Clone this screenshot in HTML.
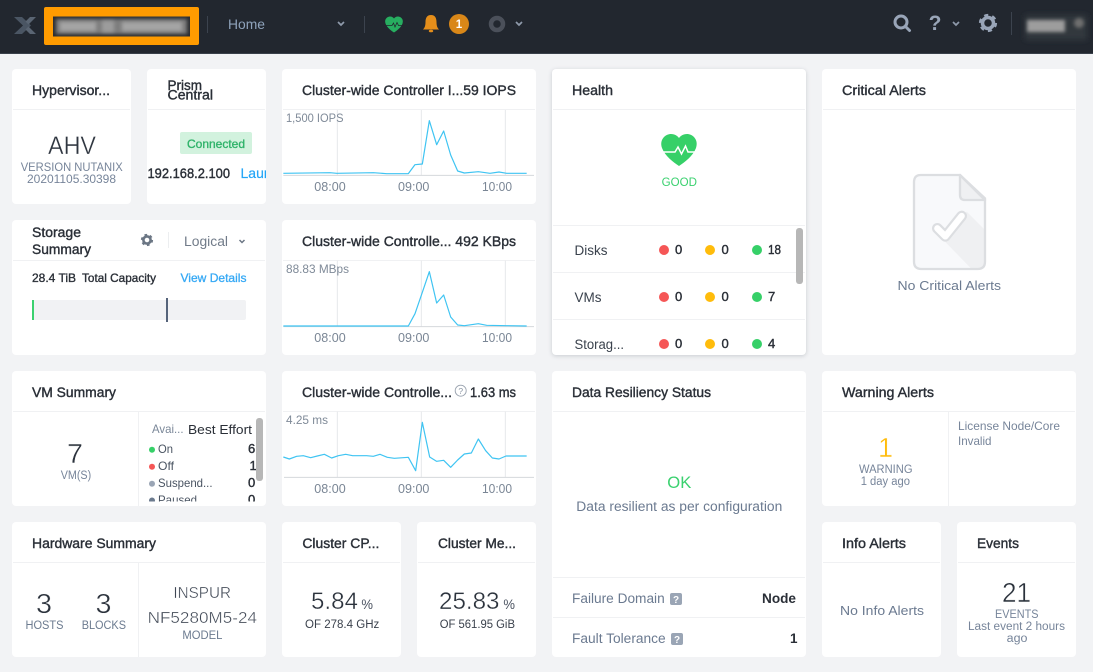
<!DOCTYPE html>
<html lang="en">
<head>
<meta charset="utf-8">
<title>Prism Home</title>
<style>
html,body{margin:0;padding:0;width:1093px;height:672px;overflow:hidden;background:#f2f3f5;font-family:"Liberation Sans",sans-serif}
#top{position:absolute;left:0;top:0;width:1093px;height:53px;background:#22272f;border-bottom:1px solid #39404a}
.card{position:absolute;background:#fff;border-radius:4px}
.card i{position:absolute;left:1px;right:1px;top:40px;height:1px;background:#f0f1f3}
svg{position:absolute;left:0;top:0}
text{font-family:"Liberation Sans",sans-serif}
.ti{font-size:13.5px;fill:#2a2f37;stroke:#2a2f37;stroke-width:.38}
.ax{font-size:12.5px;fill:#7a8695}
.yl{font-size:12px;fill:#7f8a98}
.sm{font-size:11.5px;fill:#77859a}
.big{font-size:28px;fill:#2b323c;stroke:#fff;stroke-width:.45}
.thin{stroke:#fff;stroke-width:.35}
.lb{font-size:13px;fill:#6b7a90}
.nm{font-size:13px;fill:#2a2f37;stroke:#2a2f37;stroke-width:.4}
.gl{stroke:#e6e8eb;stroke-width:3;fill:none}
.ln{stroke:#3fc4f2;stroke-width:3.6;fill:none;stroke-linejoin:round}
.dv{stroke:#f0f1f3;stroke-width:1}
</style>
</head>
<body>
<div id="top"></div>
<div class="card" style="left:12px;top:69px;width:119px;height:135px"><i></i></div>
<div class="card" style="left:147px;top:69px;width:119px;height:135px"><i></i></div>
<div class="card" style="left:12px;top:220px;width:254px;height:135px"><i></i></div>
<div class="card" style="left:282px;top:69px;width:254px;height:135px"><i></i></div>
<div class="card" style="left:282px;top:220px;width:254px;height:135px"><i></i></div>
<div class="card" style="left:282px;top:371px;width:254px;height:135px"><i></i></div>
<div class="card" style="left:552px;top:69px;width:254px;height:286px;box-shadow:0 1px 4px rgba(60,70,85,.22)"><i></i></div>
<div class="card" style="left:822px;top:69px;width:254px;height:286px"><i></i></div>
<div class="card" style="left:12px;top:371px;width:254px;height:135px"><i></i></div>
<div class="card" style="left:12px;top:522px;width:254px;height:135px"><i></i></div>
<div class="card" style="left:282px;top:522px;width:119px;height:135px"><i></i></div>
<div class="card" style="left:417px;top:522px;width:119px;height:135px"><i></i></div>
<div class="card" style="left:552px;top:371px;width:254px;height:286px"><i></i></div>
<div class="card" style="left:822px;top:371px;width:254px;height:135px"><i></i></div>
<div class="card" style="left:822px;top:522px;width:119px;height:135px"><i></i></div>
<div class="card" style="left:957px;top:522px;width:119px;height:135px"><i></i></div>

<svg width="1093" height="672" viewBox="0 0 1093 672" xmlns="http://www.w3.org/2000/svg">
<defs>
<filter id="b" x="-30%" y="-100%" width="160%" height="300%"><feGaussianBlur stdDeviation="2.6"/></filter>
<filter id="b2" x="-30%" y="-60%" width="160%" height="220%"><feGaussianBlur stdDeviation="1.8"/></filter>
<clipPath id="c0"><rect x="53" y="16.500" width="137" height="20"/></clipPath>
<clipPath id="c1"><rect x="147" y="69" width="119" height="135"/></clipPath>
<clipPath id="c2"><rect x="12" y="411" width="254" height="90.500"/></clipPath>
<path id="heart" d="M18 32C12 28 4 22 1 14C-2 5 5 0 10 0C14 0 16.500 2 18 4C19.500 2 22 0 26 0C31 0 38 5 35 14C32 22 24 28 18 32Z"/>
</defs>

<!-- top bar -->
<path d="M14 17h8l9 8.500-9 8.500h-8l9-8.500z" fill="#4a5563"/>
<path d="M36 17h-6l-4.500 4.500 3 3zM36 34h-6l-4.500-4.500 3-3z" fill="#5a6573"/>
<rect x="44" y="7" width="155" height="38" rx="2" fill="#ff9b00"/>
<rect x="53" y="16.500" width="137" height="20" fill="#2a2c30"/>
<g clip-path="url(#c0)">
<rect x="56" y="19" width="131" height="15" fill="#7e7e7e" filter="url(#b2)"/>
<rect x="60" y="22" width="36" height="9" fill="#a4a4a4" filter="url(#b2)"/>
<rect x="102" y="21" width="12" height="11" fill="#9c9c9c" filter="url(#b2)"/>
<rect x="122" y="22" width="60" height="9" fill="#a4a4a4" filter="url(#b2)"/>
</g>
<path d="M207.500 16v17M364.500 16v17M1011.500 12v23" stroke="#3c434e"/>
<text x="228" y="29" font-size="14" fill="#8fa3bb" textLength="37" lengthAdjust="spacingAndGlyphs">Home</text>
<path d="M338 22l3 3 3-3M516 22l3 3 3-3M953 22l3 3 3-3" fill="none" stroke="#8f9aab" stroke-width="1.700"/>
<use href="#heart" transform="translate(385 16.500) scale(.5)" fill="#27ae60"/>
<path d="M385 25.500h7l1.500-2.500 1.500 4 2-4.500 1.500 3h5" fill="none" stroke="#22272f" stroke-width=".8"/>
<path d="M431 15c-4 0-5.500 3-5.500 7 0 4-1 6-2.500 7.500h16c-1.500-1.500-2.500-3.500-2.500-7.500 0-4-1.500-7-5.500-7z" fill="#e58e1a"/>
<ellipse cx="431" cy="31" rx="2.200" ry="1.300" fill="#e58e1a"/>
<circle cx="459" cy="24" r="10" fill="#d98718"/>
<text x="459" y="28" font-size="11.500" font-weight="bold" fill="#fff" text-anchor="middle">1</text>
<circle cx="497" cy="24" r="6" fill="none" stroke="#4b505a" stroke-width="4.500"/>
<circle cx="901" cy="22" r="6" fill="none" stroke="#99a5b8" stroke-width="3"/>
<path d="M905.500 26.500l4 4" stroke="#99a5b8" stroke-width="3" stroke-linecap="round"/>
<text x="935" y="30" font-size="21" font-weight="bold" fill="#99a5b8" text-anchor="middle">?</text>
<circle cx="988" cy="23" r="5.500" fill="none" stroke="#99a5b8" stroke-width="3.500"/>
<circle cx="988" cy="23" r="8" fill="none" stroke="#99a5b8" stroke-width="2.200" stroke-dasharray="4.190 4.190"/>
<rect x="1025" y="15" width="62" height="25" fill="#33373e" filter="url(#b)"/>
<rect x="1027" y="20" width="38" height="12" fill="#9d9d9d" filter="url(#b2)"/>
<circle cx="1079" cy="23" r="5" fill="#6f6f6f" filter="url(#b2)"/>

<!-- hypervisor -->
<text class="ti" x="32" y="95" textLength="78" lengthAdjust="spacingAndGlyphs">Hypervisor...</text>
<text class="thin" x="48" y="154" font-size="25" fill="#2f3640" textLength="48" lengthAdjust="spacingAndGlyphs">AHV</text>
<text class="sm" x="20.700" y="171" textLength="102" lengthAdjust="spacingAndGlyphs">VERSION NUTANIX</text>
<text class="sm" x="27" y="183" textLength="89" lengthAdjust="spacingAndGlyphs">20201105.30398</text>

<!-- prism central -->
<text class="ti" x="167.500" y="90" textLength="34.500" lengthAdjust="spacingAndGlyphs">Prism</text>
<text class="ti" x="167.500" y="99.500" textLength="45.500" lengthAdjust="spacingAndGlyphs">Central</text>
<rect x="180" y="132" width="72" height="22" rx="2" fill="#d2f2de"/>
<text x="187" y="148" font-size="12" fill="#2fb36a" stroke="#2fb36a" stroke-width=".35" textLength="58" lengthAdjust="spacingAndGlyphs">Connected</text>
<g clip-path="url(#c1)">
<text x="147.500" y="178" font-size="14" fill="#2a2f37" stroke="#2a2f37" stroke-width=".4" textLength="82.500" lengthAdjust="spacingAndGlyphs">192.168.2.100</text>
<text x="240.500" y="178" font-size="14" fill="#22a5f7" stroke="#22a5f7" stroke-width=".2">Launch</text>
</g>

<!-- storage -->
<text class="ti" x="32" y="237" textLength="49" lengthAdjust="spacingAndGlyphs">Storage</text>
<text class="ti" x="32" y="254" textLength="59" lengthAdjust="spacingAndGlyphs">Summary</text>
<circle cx="147" cy="240" r="3.600" fill="none" stroke="#6b7684" stroke-width="2.600"/>
<circle cx="147" cy="240" r="5.300" fill="none" stroke="#6b7684" stroke-width="1.600" stroke-dasharray="2.770 2.780"/>
<path d="M168.500 232v16" stroke="#eceef0"/>
<text x="184" y="246" font-size="13.500" fill="#717b89" textLength="44" lengthAdjust="spacingAndGlyphs">Logical</text>
<path d="M239.500 240l2.500 2.500 2.500-2.500" fill="none" stroke="#6b7684" stroke-width="1.500"/>
<text x="32" y="282" font-size="12" fill="#2a2f37" stroke="#2a2f37" stroke-width=".35" textLength="44" lengthAdjust="spacingAndGlyphs">28.4 TiB</text>
<text x="82" y="282" font-size="12" fill="#2a2f37" stroke="#2a2f37" stroke-width=".35" textLength="74" lengthAdjust="spacingAndGlyphs">Total Capacity</text>
<text x="180.500" y="282" font-size="12" fill="#36a9f5" stroke="#36a9f5" stroke-width=".3" textLength="66" lengthAdjust="spacingAndGlyphs">View Details</text>
<rect x="32" y="300" width="214" height="20" rx="2" fill="#f1f2f4"/>
<rect x="32" y="300" width="2" height="20" fill="#3bd16f"/>
<rect x="166" y="298" width="2" height="24" fill="#55637a"/>

<!-- chart 1 -->
<text class="ti" x="302" y="95" textLength="214" lengthAdjust="spacingAndGlyphs">Cluster-wide Controller I...59 IOPS</text>
<g transform="translate(280 60) scale(.33333)">
<path class="gl" d="M172 150V346M424 150V346M676 150V346"/>
<path d="M10 346H762" stroke="#d5d8dc" stroke-width="3"/>
<path class="ln" d="M10 340L150 338 170 340 280 338 320 341 385 341 405 314 427 312 448 182 470 254 491 213 512 285 533 333 553 339 595 335 630 340 657 336 680 340 740 340"/>
</g>
<text class="yl" x="286" y="122" textLength="57.500" lengthAdjust="spacingAndGlyphs">1,500 IOPS</text>
<text class="ax" x="314.300" y="191" textLength="31.400" lengthAdjust="spacingAndGlyphs">08:00</text>
<text class="ax" x="398" y="191" textLength="31.400" lengthAdjust="spacingAndGlyphs">09:00</text>
<text class="ax" x="482" y="191" textLength="30" lengthAdjust="spacingAndGlyphs">10:00</text>

<!-- chart 2 -->
<text class="ti" x="302" y="246" textLength="214" lengthAdjust="spacingAndGlyphs">Cluster-wide Controlle... 492 KBps</text>
<g transform="translate(280 215) scale(.33333)">
<path class="gl" d="M172 137V335M424 137V335M676 137V335"/>
<path d="M10 335H762" stroke="#d5d8dc" stroke-width="3"/>
<path class="ln" d="M10 333L385 333 405 296 427 232 448 170 470 264 491 240 512 306 533 330 553 332 595 326 620 331 680 332 740 333"/>
</g>
<text class="yl" x="286" y="273" textLength="63" lengthAdjust="spacingAndGlyphs">88.83 MBps</text>
<text class="ax" x="314.300" y="342" textLength="31.400" lengthAdjust="spacingAndGlyphs">08:00</text>
<text class="ax" x="398" y="342" textLength="31.400" lengthAdjust="spacingAndGlyphs">09:00</text>
<text class="ax" x="482" y="342" textLength="30" lengthAdjust="spacingAndGlyphs">10:00</text>

<!-- chart 3 -->
<text class="ti" x="302" y="397" textLength="150" lengthAdjust="spacingAndGlyphs">Cluster-wide Controlle...</text>
<circle cx="460.700" cy="390.700" r="5.500" fill="none" stroke="#9aa3af" stroke-width=".9"/>
<text x="460.700" y="394" font-size="8.500" fill="#8a95a3" text-anchor="middle">?</text>
<text class="ti" x="470" y="397" textLength="46" lengthAdjust="spacingAndGlyphs">1.63 ms</text>
<g transform="translate(280 365) scale(.33333)">
<path class="gl" d="M172 140V337M424 140V337M676 140V337"/>
<path d="M12 337H762" stroke="#d5d8dc" stroke-width="3"/>
<path class="ln" d="M10 276L28 282 50 274 70 272 92 278 112 273 133 268 155 279 175 272 197 268 218 272 260 272 280 274 300 268 322 277 343 280 385 277 407 317 427 172 449 276 470 289 491 286 512 307 533 285 553 267 574 264 595 222 617 257 637 279 657 282 678 273 740 273"/>
</g>
<text class="yl" x="286" y="424" textLength="42" lengthAdjust="spacingAndGlyphs">4.25 ms</text>
<text class="ax" x="314.300" y="493" textLength="31.400" lengthAdjust="spacingAndGlyphs">08:00</text>
<text class="ax" x="398" y="493" textLength="31.400" lengthAdjust="spacingAndGlyphs">09:00</text>
<text class="ax" x="482" y="493" textLength="30" lengthAdjust="spacingAndGlyphs">10:00</text>

<!-- health -->
<text class="ti" x="572" y="95" textLength="41" lengthAdjust="spacingAndGlyphs">Health</text>
<use href="#heart" transform="translate(661 134)" fill="#36d068"/>
<path d="M661 152h14l3-5 3.500 7 4-8 2.500 6h9" fill="none" stroke="#fff" stroke-width="1.500"/>
<text x="661.700" y="186" font-size="11.500" fill="#3ad16f" textLength="35.300" lengthAdjust="spacingAndGlyphs">GOOD</text>
<path class="dv" d="M553 225.500H805M553 272.500H805M553 319.500H805"/>
<text x="574.500" y="255" font-size="13.500" fill="#3a424d" textLength="33" lengthAdjust="spacingAndGlyphs">Disks</text>
<text x="574.500" y="302" font-size="13.500" fill="#3a424d" textLength="27" lengthAdjust="spacingAndGlyphs">VMs</text>
<text x="574.500" y="349" font-size="13.500" fill="#3a424d" textLength="49.500" lengthAdjust="spacingAndGlyphs">Storag...</text>
<g fill="#f55656"><circle cx="664" cy="250" r="5"/><circle cx="664" cy="297" r="5"/><circle cx="664" cy="344" r="5"/></g>
<g fill="#ffbc0b"><circle cx="710" cy="250" r="5"/><circle cx="710" cy="297" r="5"/><circle cx="710" cy="344" r="5"/></g>
<g fill="#36d068"><circle cx="757" cy="250" r="5"/><circle cx="757" cy="297" r="5"/><circle cx="757" cy="344" r="5"/></g>
<text class="nm" x="675" y="254">0</text><text class="nm" x="721.500" y="254">0</text><text class="nm" x="768" y="254" textLength="13" lengthAdjust="spacingAndGlyphs">18</text>
<text class="nm" x="675" y="301">0</text><text class="nm" x="721.500" y="301">0</text><text class="nm" x="768" y="301">7</text>
<text class="nm" x="675" y="348">0</text><text class="nm" x="721.500" y="348">0</text><text class="nm" x="768" y="348">4</text>
<rect x="796" y="228" width="7" height="56" rx="3" fill="#b7b7b7"/>

<!-- critical -->
<text class="ti" x="842" y="95" textLength="84" lengthAdjust="spacingAndGlyphs">Critical Alerts</text>
<g transform="translate(820 65) scale(.33333)">
<path d="M302 330H420L495 400V590Q495 612 473 612H304Q282 612 282 590V352Q282 330 302 330Z" fill="#f8f9fb"/>
<path d="M440 440L495 495V590Q495 612 473 612H455L375 530Z" fill="#eff0f2"/>
<path d="M420 330V390Q420 405 435 405H495Z" fill="#eff0f2" stroke="#dcdee1" stroke-width="7" stroke-linejoin="round"/>
<path d="M302 330H420L495 400V590Q495 612 473 612H304Q282 612 282 590V352Q282 330 302 330Z" fill="none" stroke="#dcdee1" stroke-width="7"/>
<path d="M352 490L376 514 425 453" fill="none" stroke="#dcdee1" stroke-width="32" stroke-linecap="round" stroke-linejoin="round"/>
<path d="M352 490L376 514 425 453" fill="none" stroke="#fff" stroke-width="19" stroke-linecap="round" stroke-linejoin="round"/>
</g>
<text class="lb" x="897.500" y="290" textLength="103.500" lengthAdjust="spacingAndGlyphs">No Critical Alerts</text>

<!-- vm summary -->
<text class="ti" x="32" y="397" textLength="84" lengthAdjust="spacingAndGlyphs">VM Summary</text>
<path class="dv" d="M138.500 411V506"/>
<text class="big" x="67" y="463" textLength="16" lengthAdjust="spacingAndGlyphs">7</text>
<text class="sm" x="60.700" y="479" textLength="30.500" lengthAdjust="spacingAndGlyphs">VM(S)</text>
<g clip-path="url(#c2)">
<text x="152" y="433" font-size="12" fill="#7a8798" textLength="31.500" lengthAdjust="spacingAndGlyphs">Avai...</text>
<text x="188" y="434" font-size="13" fill="#2a2f37" textLength="64" lengthAdjust="spacingAndGlyphs">Best Effort</text>
<circle cx="152" cy="449.700" r="3" fill="#36d068"/><circle cx="152" cy="466.800" r="3" fill="#f55656"/><circle cx="152" cy="483.700" r="3" fill="#9aa5b5"/><circle cx="152" cy="500.500" r="3" fill="#6b7a8e"/>
<text x="158" y="453" font-size="12" fill="#4a5462" textLength="15" lengthAdjust="spacingAndGlyphs">On</text>
<text x="158" y="470" font-size="12" fill="#4a5462" textLength="16" lengthAdjust="spacingAndGlyphs">Off</text>
<text x="158" y="487" font-size="12" fill="#4a5462" textLength="54.500" lengthAdjust="spacingAndGlyphs">Suspend...</text>
<text x="158" y="504" font-size="12" fill="#4a5462" textLength="39" lengthAdjust="spacingAndGlyphs">Paused</text>
<text class="nm" x="248" y="453">6</text><text class="nm" x="249.500" y="470">1</text><text class="nm" x="248" y="487">0</text><text class="nm" x="248" y="504">0</text>
</g>
<rect x="256" y="418" width="7" height="63" rx="3" fill="#b7b7b7"/>

<!-- hardware -->
<text class="ti" x="32" y="548" textLength="124" lengthAdjust="spacingAndGlyphs">Hardware Summary</text>
<path class="dv" d="M138.500 562V657"/>
<text class="big" x="36" y="613" textLength="16" lengthAdjust="spacingAndGlyphs">3</text>
<text class="sm" style="fill:#6c7b90" x="25.500" y="629" textLength="38" lengthAdjust="spacingAndGlyphs">HOSTS</text>
<text class="big" x="95.500" y="613" textLength="16" lengthAdjust="spacingAndGlyphs">3</text>
<text class="sm" style="fill:#6c7b90" x="81.700" y="629" textLength="44.300" lengthAdjust="spacingAndGlyphs">BLOCKS</text>
<text class="thin" x="173.400" y="598" font-size="15.500" fill="#3f4754" textLength="57.600" lengthAdjust="spacingAndGlyphs">INSPUR</text>
<text class="thin" x="147.600" y="623" font-size="15.500" fill="#3f4754" textLength="109.400" lengthAdjust="spacingAndGlyphs">NF5280M5-24</text>
<text class="sm" style="fill:#6c7b90" x="182.400" y="639" textLength="40" lengthAdjust="spacingAndGlyphs">MODEL</text>

<!-- cpu -->
<text class="ti" x="302.400" y="548" textLength="77" lengthAdjust="spacingAndGlyphs">Cluster CP...</text>
<text class="thin" x="311" y="609" font-size="24" fill="#2b323c" textLength="47" lengthAdjust="spacingAndGlyphs">5.84</text>
<text x="361.400" y="609" font-size="14" fill="#4a5260" textLength="11.600" lengthAdjust="spacingAndGlyphs">%</text>
<text x="305" y="628" font-size="11.500" fill="#3a414c" textLength="74.300" lengthAdjust="spacingAndGlyphs">OF 278.4 GHz</text>

<!-- memory -->
<text class="ti" x="438" y="548" textLength="78" lengthAdjust="spacingAndGlyphs">Cluster Me...</text>
<text class="thin" x="439" y="609" font-size="24" fill="#2b323c" textLength="60.500" lengthAdjust="spacingAndGlyphs">25.83</text>
<text x="503.400" y="609" font-size="14" fill="#4a5260" textLength="11.600" lengthAdjust="spacingAndGlyphs">%</text>
<text x="439.700" y="628" font-size="11.500" fill="#3a414c" textLength="75.300" lengthAdjust="spacingAndGlyphs">OF 561.95 GiB</text>

<!-- data resiliency -->
<text class="ti" x="572" y="397" textLength="139" lengthAdjust="spacingAndGlyphs">Data Resiliency Status</text>
<text x="667.300" y="488" font-size="17" fill="#3ad16f" textLength="24" lengthAdjust="spacingAndGlyphs">OK</text>
<text x="576.300" y="511" font-size="13.500" fill="#6b7a90" textLength="206" lengthAdjust="spacingAndGlyphs">Data resilient as per configuration</text>
<path class="dv" d="M553 577.500H805M553 617.500H805"/>
<text x="572" y="603" font-size="13.500" fill="#6b7a90" textLength="92.700" lengthAdjust="spacingAndGlyphs">Failure Domain</text>
<rect x="670" y="593" width="12" height="12" rx="2" fill="#9aa5b5"/>
<text x="676" y="602.800" font-size="10" font-weight="bold" fill="#fff" text-anchor="middle">?</text>
<text x="762" y="603" font-size="13.500" font-weight="bold" fill="#2a2f37" textLength="34" lengthAdjust="spacingAndGlyphs">Node</text>
<text x="572" y="643" font-size="13.500" fill="#6b7a90" textLength="93.700" lengthAdjust="spacingAndGlyphs">Fault Tolerance</text>
<rect x="671" y="633" width="12" height="12" rx="2" fill="#9aa5b5"/>
<text x="677" y="642.800" font-size="10" font-weight="bold" fill="#fff" text-anchor="middle">?</text>
<text x="790" y="643" font-size="13.500" font-weight="bold" fill="#2a2f37">1</text>

<!-- warning -->
<text class="ti" x="842" y="397" textLength="92" lengthAdjust="spacingAndGlyphs">Warning Alerts</text>
<path class="dv" d="M948.500 411V506"/>
<text class="big" style="fill:#ffbc0b" x="878" y="457" textLength="15" lengthAdjust="spacingAndGlyphs">1</text>
<text class="sm" x="859" y="473" textLength="53.500" lengthAdjust="spacingAndGlyphs">WARNING</text>
<text class="sm" x="860.700" y="485" textLength="49.300" lengthAdjust="spacingAndGlyphs">1 day ago</text>
<text x="958" y="430" font-size="12" fill="#77859a" textLength="102" lengthAdjust="spacingAndGlyphs">License Node/Core</text>
<text x="958" y="445" font-size="12" fill="#77859a" textLength="33.500" lengthAdjust="spacingAndGlyphs">Invalid</text>

<!-- info -->
<text class="ti" x="842" y="548" textLength="64" lengthAdjust="spacingAndGlyphs">Info Alerts</text>
<text class="lb" x="840" y="615" textLength="84" lengthAdjust="spacingAndGlyphs">No Info Alerts</text>

<!-- events -->
<text class="ti" x="977" y="548" textLength="42" lengthAdjust="spacingAndGlyphs">Events</text>
<text class="big" x="1002" y="602" textLength="29" lengthAdjust="spacingAndGlyphs">21</text>
<text class="sm" x="995" y="618" textLength="43.500" lengthAdjust="spacingAndGlyphs">EVENTS</text>
<text class="sm" x="968" y="630" textLength="97" lengthAdjust="spacingAndGlyphs">Last event 2 hours</text>
<text class="sm" x="1006.700" y="642" textLength="20.800" lengthAdjust="spacingAndGlyphs">ago</text>
</svg>
</body>
</html>
